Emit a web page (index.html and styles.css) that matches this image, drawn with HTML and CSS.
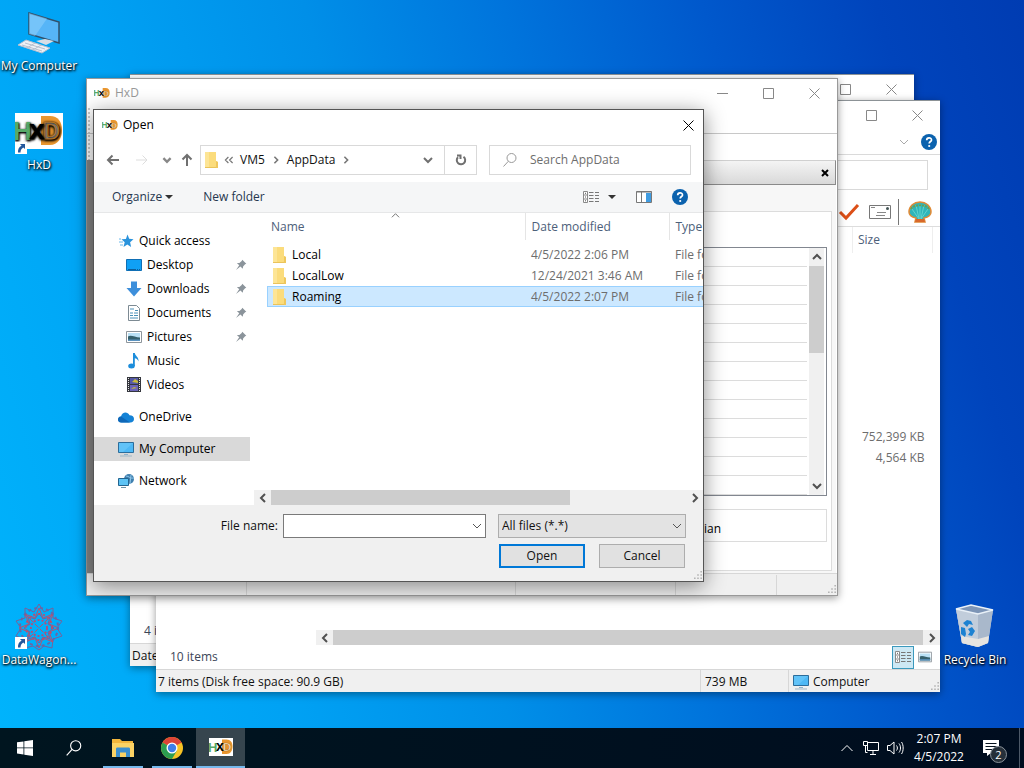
FILE: index.html
```html
<!DOCTYPE html>
<html lang="en">
<head>
    <meta charset="UTF-8" />
    <meta name="viewport" content="width=device-width, initial-scale=1.0" />
    <title>Desktop</title>
    <link rel="stylesheet" href="styles.css">
</head>
<body>
    <!-- shared icons -->
    <svg class="sprite" aria-hidden="true">
        <symbol id="i-min" viewBox="0 0 11 11"><path d="M0 5.500h11" /></symbol>
        <symbol id="i-max" viewBox="0 0 11 11"><path d="M.5.5h10v10h-10z" /></symbol>
        <symbol id="i-close" viewBox="0 0 11 11"><path d="M.5.5l10 10M10.500.5l-10 10" /></symbol>
        <symbol id="i-down" viewBox="0 0 10 10"><path d="M1 3l4 4 4-4" /></symbol>
        <symbol id="i-up" viewBox="0 0 10 10"><path d="M1 7l4-4 4 4" /></symbol>
        <symbol id="i-left" viewBox="0 0 10 10"><path d="M7 1L3 5l4 4" /></symbol>
        <symbol id="i-right" viewBox="0 0 10 10"><path d="M3 1l4 4-4 4" /></symbol>
        <symbol id="i-caret" viewBox="0 0 8 4"><path d="M0 0h8L4 4z" /></symbol>
        <symbol id="i-grip" viewBox="0 0 10 10">
            <path d="M8 0h2v2H8zM8 4h2v2H8zM8 8h2v2H8zM4 4h2v2H4zM4 8h2v2H4zM0 8h2v2H0z" fill="#b4b4b4" />
        </symbol>
        <symbol id="i-search" viewBox="0 0 16 16">
            <circle cx="9.500" cy="6" r="4.500" /><path d="M6.300 9.300L1.500 14.500" />
        </symbol>
        <symbol id="i-help" viewBox="0 0 16 16">
            <circle cx="8" cy="8" r="8" fill="#0b62ae" />
            <path d="M5.700 6.200c0-3 4.800-3 4.800-.3C10.500 7.500 8.200 7.600 8.200 9.600" fill="none" stroke="#fff" stroke-width="1.700" />
            <circle cx="8.200" cy="12" r="1.100" fill="#fff" />
        </symbol>
        <symbol id="i-list" viewBox="0 0 16 12">
            <path d="M.5.5h4v11h-4zM.5 4h4M.5 8h4" fill="#fff" stroke="#8a8a8a" />
            <path d="M2 2.300h1M2 6h1M2 9.800h1" stroke="#555" />
            <path d="M6 1.500h4.500M12 1.500h4M6 4.500h4.500M12 4.500h4M6 7.500h4.500M12 7.500h4M6 10.500h4.500M12 10.500h4" stroke="#777" />
        </symbol>
        <symbol id="i-folder" viewBox="0 0 16 16">
            <path d="M1 0h11v9l2 1v6H1z" fill="#fbdc7c" />
            <path d="M1 0h4v16H1z" fill="#fde596" />
            <path d="M12 9l2 1v6h-3l1-1.500z" fill="#efc75c" />
            <path d="M1 15.500h11" stroke="#eac35a" />
        </symbol>
        <symbol id="i-pc" viewBox="0 0 16 16">
            <path d="M.5 1.500h15v10H.5z" fill="#4db8f5" stroke="#2c6d9b" />
            <path d="M1 2h14L5 11H1z" fill="#6fcafa" opacity=".6" />
            <path d="M6 13.500h4" stroke="#8fb3cc" /><path d="M2 15h12" stroke="#9fb7c6" />
        </symbol>
        <symbol id="i-pic" viewBox="0 0 16 16">
            <path d="M.5 2.500h15v11H.5z" fill="#fff" stroke="#8d959b" />
            <path d="M2 4h12v8H2z" fill="#b9e0f5" />
            <path d="M2 7.500c3-2 7 1 12 1V12H2z" fill="#35606c" /><path d="M2 10.500h12V12H2z" fill="#5b93c0" />
        </symbol>
        <symbol id="i-pin" viewBox="0 0 12 12">
            <path d="M7.300.8l4 4-1.200.5-2 2.200-.3 2.300L5.400 7.600 1 11l3.200-4.700-2.300-2.200 2.500-.2 2.300-2z" fill="#8b949b" />
        </symbol>
        <symbol id="i-shortcut" viewBox="0 0 12 12">
            <path d="M0 0h12v12H0z" fill="#fff" />
            <path d="M5 2h5v5L8.300 5.400C6.500 6.500 5.500 8 5.500 10.500H3C2.800 7 4 5 6.600 3.700z" fill="#24579c" />
        </symbol>
        <symbol id="i-hxd" viewBox="0 0 48 36">
            <path d="M26 3h9c8 0 12 6 12 14s-4 15-12 15h-9z" fill="#e9962f" />
            <g font-family="Liberation Sans" font-weight="bold">
                <text x="-2" y="27" font-size="26" fill="#57a968">H</text>
                <text x="28" y="26" font-size="23" fill="#fbe9cf" stroke="#b8741f" stroke-width="1">D</text>
                <text x="14" y="26" font-size="28" fill="#000">x</text>
            </g>
        </symbol>
    </svg>

    <main class="desktop">
        <!-- desktop shortcuts -->
        <a class="shortcut shortcut-computer" href="#">
            <svg class="shortcut-icon" viewBox="0 0 48 48">
                <path d="M14 4l30 9v21L14 25z" fill="#56b5f7" stroke="#31506b" stroke-width="1.500" />
                <path d="M14 4l18 5.500L20 27l-6-2z" fill="#8fd0fb" opacity=".55" />
                <path d="M21 32l9-2 9 2-8 4z" fill="#d7dde6" />
                <path d="M3 36l8-5 24 8-8 5z" fill="#edf0f5" stroke="#b5bfcf" />
                <path d="M7 36l20 6M10 34l20 6M12 39l8-5M18 41l8-5" stroke="#b5bfcf" />
            </svg>
            <span>My Computer</span>
        </a>
        <a class="shortcut shortcut-hxd" href="#">
            <svg class="shortcut-icon" viewBox="0 0 48 48">
                <path d="M0 5h48v36H0z" fill="#fff" />
                <use href="#i-hxd" y="5" width="48" height="36" />
                <use href="#i-shortcut" x="0" y="34" width="12" height="12" />
            </svg>
            <span>HxD</span>
        </a>
        <a class="shortcut shortcut-wagon" href="#">
            <svg class="shortcut-icon" viewBox="0 0 48 48">
                <g fill="none" stroke="#75639c">
                    <path d="M24 1l5 8 9-4v10l9 3-5 7 5 8-9 3-1 9-8-2-5 4-6-4-8 2-1-9-8-3 5-8-5-7 9-3V5l9 4z" />
                    <path d="M24 5l4 10 10-4-4 10 10 4-10 4 4 10-10-4-4 10-4-10-10 4 4-10-10-4 10-4-4-10 10 4z" stroke="#b9506f" />
                    <path d="M24 10l4 6 7-2-2 7 6 4-6 4 2 7-7-2-4 6-4-6-7 2 2-7-6-4 6-4-2-7 7 2z" />
                    <path d="M10 11l28 28M38 11L10 39" stroke="#b9506f" stroke-dasharray="5 2" />
                    <circle cx="24" cy="25" r="8" stroke="#b04f7d" stroke-width="2" stroke-dasharray="2 2" />
                    <circle cx="24" cy="24" r="13" stroke="#b9506f" stroke-width="2" stroke-dasharray="2 3" />
                    <circle cx="24" cy="24" r="19" stroke-width="2" stroke-dasharray="3 3" stroke="#6967a6" />
                </g>
                <use href="#i-shortcut" x="0" y="34" width="12" height="12" />
            </svg>
            <span>DataWagon...</span>
        </a>
        <a class="shortcut shortcut-bin" href="#">
            <svg class="shortcut-icon" viewBox="0 0 48 48">
                <path d="M5 6l15-4 22 5-5 33-10 4-16-4z" fill="#b5c7dc" />
                <path d="M5 6l22 5 15-4-5 33-10 4-16-4z" fill="#a9b8cb" />
                <path d="M5 6l22 5v33l-16-4z" fill="#c1cddb" />
                <path d="M10 33l17 3 11-3-1 7-10 4-16-4z" fill="#e6e4e0" />
                <path d="M5 6l15-4 22 5-15 4z" fill="#7d95b6" stroke="#e9f1f8" stroke-width="1.500" />
                <path d="M12 20l4-3 4 1 2 4-4-1-2 3zM21 24l3 4-3 5-4-1 2-3-2-3zM10 24l4 1 1 6-1 3-4-3z" fill="#1c82d2" />
            </svg>
            <span>Recycle Bin</span>
        </a>

        <!-- window at the very back -->
        <section class="window win-back">
            <header class="titlebar">
                <div class="controls">
                    <button aria-label="Minimize"><svg><use href="#i-min" /></svg></button>
                    <button aria-label="Maximize"><svg><use href="#i-max" /></svg></button>
                    <button aria-label="Close"><svg><use href="#i-close" /></svg></button>
                </div>
            </header>
            <div class="fill"></div>
            <div class="item-count">4 items</div>
            <footer class="statusbar"><span class="status-text">Date</span></footer>
        </section>

        <!-- file explorer -->
        <section class="window win-explorer">
            <header class="titlebar">
                <div class="controls">
                    <button aria-label="Minimize"><svg><use href="#i-min" /></svg></button>
                    <button aria-label="Maximize"><svg><use href="#i-max" /></svg></button>
                    <button aria-label="Close"><svg><use href="#i-close" /></svg></button>
                </div>
            </header>
            <div class="ribbon">
                <button class="icon-btn" aria-label="Expand ribbon"><svg class="stroke-light"><use href="#i-down" /></svg></button>
                <button class="icon-btn" aria-label="Help"><svg class="ic16"><use href="#i-help" /></svg></button>
            </div>
            <div class="explorer-address"><input type="text" aria-label="Address" /></div>
            <div class="explorer-tools">
                <button class="icon-btn" aria-label="Apply">
                    <svg class="ic22" viewBox="0 0 22 22"><path d="M2 11l6 6L20 4" fill="none" stroke="#dc4f17" stroke-width="3" /></svg>
                </button>
                <button class="icon-btn" aria-label="Mail">
                    <svg class="ic22" viewBox="0 0 22 22">
                        <path d="M.5 4.500h21v13H.5z" fill="#fff" stroke="#777" />
                        <path d="M2 6.500h4M8 11.500h9M7 14.500h9" stroke="#888" /><circle cx="18.500" cy="7.500" r="1.500" fill="#455" />
                    </svg>
                </button>
                <span class="tool-sep"></span>
                <button class="icon-btn" aria-label="Shell">
                    <svg class="ic24" viewBox="0 0 24 24">
                        <path d="M7 22l1-4C3 17 1 15 1 12 1 6 6 2 12 2s11 4 11 10c0 3-2 5-7 6l1 4z" fill="#2fb5b9" stroke="#e08a36" stroke-width="1.500" />
                        <path d="M12 4v15M8 5l3 14M16 5l-3 14M4 9l7 10M20 9l-7 10" stroke="#62d3cf" fill="none" />
                        <path d="M3 9c3-5 15-5 18 0" stroke="#6b9e55" stroke-width="2" stroke-dasharray="2 1" fill="none" />
                        <path d="M7 22l1-3h8l1 3z" fill="#d8682b" />
                    </svg>
                </button>
            </div>
            <div class="explorer-body">
                <div class="explorer-list">
                    <table class="size-table">
                        <thead><tr><th>Size</th></tr></thead>
                        <tbody>
                            <tr><td></td></tr><tr><td></td></tr><tr><td></td></tr><tr><td></td></tr>
                            <tr><td></td></tr><tr><td></td></tr><tr><td></td></tr><tr><td></td></tr>
                            <tr><td>752,399 KB</td></tr>
                            <tr><td>4,564 KB</td></tr>
                        </tbody>
                    </table>
                </div>
                <div class="hscroll">
                    <button aria-label="Scroll left"><svg><use href="#i-left" /></svg></button>
                    <div class="track"><div class="thumb thumb-full"></div></div>
                    <button aria-label="Scroll right"><svg><use href="#i-right" /></svg></button>
                </div>
            </div>
            <div class="item-count">
                <span>10 items</span>
                <div class="view-switch">
                    <button class="active" aria-label="Details"><svg class="ic-list"><use href="#i-list" /></svg></button>
                    <button aria-label="Thumbnails"><svg class="ic14"><use href="#i-pic" /></svg></button>
                </div>
            </div>
            <footer class="statusbar">
                <span class="status-text">7 items (Disk free space: 90.9 GB)</span>
                <span class="status-cell status-memory">739 MB</span>
                <span class="status-cell status-zone"><svg class="ic16"><use href="#i-pc" /></svg>Computer</span>
                <svg class="grip"><use href="#i-grip" /></svg>
            </footer>
        </section>

        <!-- HxD main window -->
        <section class="window win-hxd">
            <header class="titlebar">
                <svg class="app-icon"><use href="#i-hxd" /></svg>
                <h2>HxD</h2>
                <div class="controls">
                    <button aria-label="Minimize"><svg><use href="#i-min" /></svg></button>
                    <button aria-label="Maximize"><svg><use href="#i-max" /></svg></button>
                    <button aria-label="Close"><svg><use href="#i-close" /></svg></button>
                </div>
            </header>
            <div class="hxd-menubar"></div>
            <div class="hxd-toolbar"></div>
            <div class="hxd-main">
                <div class="hxd-gutter"></div>
                <div class="inspector">
                    <div class="inspector-head">
                        <button aria-label="Close panel"><svg viewBox="0 0 8 8"><path d="M1 1l6 6M7 1L1 7" /></svg></button>
                    </div>
                    <div class="inspector-pane">
                        <div class="inspector-sheet">
                            <div class="inspector-list">
                                <div class="inspector-rows"></div>
                                <div class="vscroll">
                                    <button aria-label="Scroll up"><svg><use href="#i-up" /></svg></button>
                                    <div class="vtrack"><div class="vthumb"></div></div>
                                    <button aria-label="Scroll down"><svg><use href="#i-down" /></svg></button>
                                </div>
                            </div>
                            <div class="byte-order">Big endian</div>
                        </div>
                    </div>
                </div>
            </div>
            <footer class="statusbar hxd-status">
                <span></span><span></span><span></span><span></span><span></span>
                <svg class="grip"><use href="#i-grip" /></svg>
            </footer>
        </section>

        <!-- open dialog -->
        <section class="window dialog" role="dialog" aria-labelledby="dialog-title">
            <header class="titlebar">
                <svg class="app-icon"><use href="#i-hxd" /></svg>
                <h1 id="dialog-title">Open</h1>
                <button class="dialog-close" aria-label="Close"><svg><use href="#i-close" /></svg></button>
            </header>

            <nav class="navbar">
                <button class="nav-btn" aria-label="Back"><svg viewBox="0 0 14 14"><path d="M13 7H2M6.500 2.500L2 7l4.500 4.500" /></svg></button>
                <button class="nav-btn disabled" aria-label="Forward"><svg viewBox="0 0 14 14"><path d="M1 7h11M7.500 2.500L12 7l-4.500 4.500" /></svg></button>
                <button class="nav-btn nav-recent" aria-label="Recent locations"><svg viewBox="0 0 10 10"><path d="M2 3.500l3 3 3-3" /></svg></button>
                <button class="nav-btn nav-up" aria-label="Up"><svg viewBox="0 0 14 14"><path d="M7 13V2M2.500 6.500L7 2l4.500 4.500" /></svg></button>
                <div class="address">
                    <svg class="ic16"><use href="#i-folder" /></svg>
                    <svg class="crumb-arrow crumb-more" viewBox="0 0 10 10"><path d="M4.500 2.500L2 5l2.500 2.500M8 2.500L5.500 5 8 7.500" /></svg>
                    <a href="#">VM5</a>
                    <svg class="crumb-arrow"><use href="#i-right" /></svg>
                    <a href="#">AppData</a>
                    <svg class="crumb-arrow"><use href="#i-right" /></svg>
                    <button class="address-drop" aria-label="Previous locations"><svg><use href="#i-down" /></svg></button>
                    <button class="refresh" aria-label="Refresh">
                        <svg viewBox="0 0 12 12"><path d="M3 3.200A4.200 4.200 0 1 0 8.500 2.800M2 1.500h3.500V5" /></svg>
                    </button>
                </div>
                <label class="search">
                    <svg><use href="#i-search" /></svg>
                    <input type="text" placeholder="Search AppData" aria-label="Search AppData" />
                </label>
            </nav>

            <div class="toolbar">
                <button>Organize <svg class="caret"><use href="#i-caret" /></svg></button>
                <button class="new-folder">New folder</button>
                <div class="toolbar-right">
                    <button aria-label="Change view"><svg class="ic-list"><use href="#i-list" /></svg><svg class="caret caret-view"><use href="#i-caret" /></svg></button>
                    <button aria-label="Preview pane">
                        <svg class="ic16" viewBox="0 0 16 16"><path d="M.5 2.500h15v11H.5z" fill="#fff" stroke="#777" /><path d="M.5 3h15M5.500 3v10" stroke="#777" /><path d="M10 4h5v9h-5z" fill="#3f9be0" /></svg>
                    </button>
                    <button aria-label="Get help"><svg class="ic16"><use href="#i-help" /></svg></button>
                </div>
            </div>

            <div class="browser">
                <ul class="tree">
                    <li class="node"><svg class="ic16" viewBox="0 0 16 16"><path d="M9.500 1.500l1.700 4.300 4.300.4-3.400 3 1 4.800-3.800-2.600L5.500 14l1.200-4.700-3.200-3 4.400-.4z" fill="#2a93dc" /><path d="M1 9h4M2 12h3M1 6h2" stroke="#69b8ec" /></svg>Quick access</li>
                    <li class="node child"><svg class="ic16" viewBox="0 0 16 16"><path d="M.5 2.500h15v11H.5z" fill="#10a0f5" stroke="#0f6fb5" /><path d="M2 12.500h12" stroke="#0d5f9c" stroke-dasharray="8 1 1 1" /></svg>Desktop<svg class="pin"><use href="#i-pin" /></svg></li>
                    <li class="node child"><svg class="ic16" viewBox="0 0 16 16"><path d="M5 .5h6V7h4.500L8 15.500.5 7H5z" fill="#3d8fdb" /></svg>Downloads<svg class="pin"><use href="#i-pin" /></svg></li>
                    <li class="node child"><svg class="ic16" viewBox="0 0 16 16"><path d="M2.500.5h8l3 3v12h-11z" fill="#fff" stroke="#7d8a93" /><path d="M4 4h4M9 5.500h3M4 8h3M8 8h4M4 10.500h3M8 10.500h4M4 13h8" stroke="#4a90b8" /></svg>Documents<svg class="pin"><use href="#i-pin" /></svg></li>
                    <li class="node child"><svg class="ic16"><use href="#i-pic" /></svg>Pictures<svg class="pin"><use href="#i-pin" /></svg></li>
                    <li class="node child"><svg class="ic16" viewBox="0 0 16 16"><ellipse cx="5.500" cy="13" rx="3.300" ry="2.500" fill="#1c8ddb" /><path d="M7 0h1.800c.3 3 4.200 4 3.700 8.500-.6-2-2-3-3.700-3.300V13H7z" fill="#1c8ddb" /></svg>Music</li>
                    <li class="node child"><svg class="ic16" viewBox="0 0 16 16"><path d="M1 0h14v15H1z" fill="#34363d" /><path d="M2.500 1v14M13.500 1v14" stroke="#e8e8e8" stroke-dasharray="1 1" /><path d="M4 1h8v6H4z" fill="#5458a8" /><path d="M4 8h8v6H4z" fill="#6a63b8" /><path d="M6 5l3-3 3 2v2zM5 12l3-2 3 1" fill="#c7b93b" /></svg>Videos</li>
                    <li class="node group"><svg class="ic16" viewBox="0 0 16 16"><path d="M3.500 13.500C.8 13.500 0 12 0 10.500 0 9 1 7.600 3 7.400 4 3 9.500 2.200 11.500 6.300c3 0 4.500 1.700 4.500 3.700 0 2.200-1.500 3.500-3.500 3.500z" fill="#1482d6" /><path d="M3 7.400L12 13.500H3.500C.8 13.500 0 12 0 10.500 0 9 1 7.600 3 7.400z" fill="#0f68b8" /></svg>OneDrive</li>
                    <li class="node group selected"><svg class="ic16"><use href="#i-pc" /></svg>My Computer</li>
                    <li class="node group"><svg class="ic16" viewBox="0 0 16 16"><circle cx="11" cy="6" r="5" fill="#3f7fae" /><path d="M8 3c3 0 4 3 8 2M13 2l-1 9" stroke="#8fc5e8" fill="none" /><path d="M.5 5.500h10v7H.5z" fill="#5cc3f5" stroke="#23648f" /><path d="M3 14.500h5" stroke="#6d93a8" /></svg>Network</li>
                </ul>

                <div class="files">
                    <div class="files-view">
                        <svg class="sort-mark"><use href="#i-up" /></svg>
                        <table class="file-table">
                            <thead>
                                <tr><th class="col-name">Name</th><th class="col-date">Date modified</th><th class="col-type">Type</th></tr>
                            </thead>
                            <tbody>
                                <tr><td><svg class="ic16"><use href="#i-folder" /></svg>Local</td><td>4/5/2022 2:06 PM</td><td>File folder</td></tr>
                                <tr><td><svg class="ic16"><use href="#i-folder" /></svg>LocalLow</td><td>12/24/2021 3:46 AM</td><td>File folder</td></tr>
                                <tr class="selected"><td><svg class="ic16"><use href="#i-folder" /></svg>Roaming</td><td>4/5/2022 2:07 PM</td><td>File folder</td></tr>
                            </tbody>
                        </table>
                    </div>
                    <div class="hscroll">
                        <button aria-label="Scroll left"><svg><use href="#i-left" /></svg></button>
                        <div class="track"><div class="thumb"></div></div>
                        <button aria-label="Scroll right"><svg><use href="#i-right" /></svg></button>
                    </div>
                </div>
            </div>

            <form class="dialog-form">
                <div class="form-row">
                    <label class="name-label" for="file-name">File name:</label>
                    <div class="combo combo-name">
                        <input id="file-name" type="text" />
                        <svg><use href="#i-down" /></svg>
                    </div>
                    <div class="combo combo-type">
                        <select aria-label="File type"><option>All files (*.*)</option></select>
                        <svg><use href="#i-down" /></svg>
                    </div>
                </div>
                <div class="form-row form-actions">
                    <button class="btn btn-default" type="button">Open</button>
                    <button class="btn" type="button">Cancel</button>
                </div>
                <svg class="grip"><use href="#i-grip" /></svg>
            </form>
        </section>
    </main>

    <!-- taskbar -->
    <footer class="taskbar">
        <button class="task" aria-label="Start">
            <svg class="ic16" viewBox="0 0 16 16"><path d="M0 2.300L6.500 1.400v6.100H0zM7.300 1.300L16 0v7.500H7.300zM0 8.300h6.500v6.200L0 13.600zM7.300 8.300H16V16l-8.700-1.300z" fill="#fff" /></svg>
        </button>
        <button class="task" aria-label="Search"><svg class="ic18 stroke-white"><use href="#i-search" /></svg></button>
        <button class="task task-open" aria-label="File Explorer">
            <svg class="ic22" viewBox="0 0 22 22"><path d="M0 2h8l2 2h11v16H0z" fill="#f2b63c" /><path d="M0 6h22v14H0z" fill="#fbd365" /><path d="M4 20v-8c0-1 .5-1.500 1.500-1.500h11c1 0 1.500.5 1.500 1.500v8h-4v-4.500H8V20z" fill="#3b8fd0" /></svg>
        </button>
        <button class="task task-open" aria-label="Chrome">
            <svg class="ic22" viewBox="0 0 22 22">
                <circle cx="11" cy="11" r="11" fill="#f7c325" />
                <path d="M11 11L1.500 5.500A11 11 0 0 1 20.500 5.500z" fill="#dc4437" />
                <path d="M11 11L1.500 5.500A11 11 0 0 0 11 22l5-8.500z" fill="#2c9e50" />
                <path d="M11 5.500h9.500" stroke="#dc4437" />
                <circle cx="11" cy="11" r="5.500" fill="#fff" /><circle cx="11" cy="11" r="4.200" fill="#3f7fe8" />
            </svg>
        </button>
        <button class="task task-active" aria-label="HxD">
            <svg class="ic24" viewBox="0 0 24 24"><path d="M0 3h24v18H0z" fill="#fff" /><use href="#i-hxd" y="3" width="24" height="18" /></svg>
        </button>
        <div class="tray">
            <button class="tray-btn" aria-label="Show hidden icons"><svg class="ic14 stroke-white" viewBox="0 0 14 14"><path d="M1.500 10L7 4.500l5.500 5.500" /></svg></button>
            <button class="tray-btn" aria-label="Network"><svg class="ic18 stroke-white" viewBox="0 0 18 18"><path d="M5.500 3.500h11v8h-11zM8 15.500h6M11 11.500v4M1.500 2.500h4v4h-4zM3.500 6.500v7h2" /></svg></button>
            <button class="tray-btn" aria-label="Volume"><svg class="ic18 stroke-white" viewBox="0 0 18 18"><path d="M1.500 6.500H4l4-3.500v12l-4-3.500H1.500zM10.500 6.500c1.200 1.500 1.200 3.500 0 5M13 4.500c2 2.500 2 6.500 0 9M15.500 3c2.200 3 2.200 9 0 12" /></svg></button>
            <button class="clock"><span>2:07 PM</span><span>4/5/2022</span></button>
            <button class="notify" aria-label="Notifications">
                <svg viewBox="0 0 18 18"><path d="M1 1h16v13H9l-4 3v-3H1z" fill="#fff" /><path d="M3.500 4.500h11M3.500 7.500h11M3.500 10.500h7" stroke="#07131f" /></svg>
                <span class="badge">2</span>
            </button>
            <span class="peek"></span>
        </div>
    </footer>
</body>
</html>
```
FILE: styles.css
```css
*, *::before, *::after {
    box-sizing: border-box;
    margin: 0;
    padding: 0;
}

body {
    height: 100vh;
    display: flex;
    flex-direction: column;
    overflow: hidden;
    background: linear-gradient(74deg, #00b4fc 0%, #00a2f4 24%, #008fe8 42%, #0074dc 58%, #0058cc 74%, #0044bc 88%, #003cb2 100%);
    font-family: "Open Sans", "Noto Sans", sans-serif;
    font-size: 12px;
    line-height: 18px;
    color: #111;
}

button, input, select {
    font: inherit;
    color: inherit;
    border: none;
    background: none;
    outline: none;
}

a {
    color: inherit;
    text-decoration: none;
}

svg {
    display: block;
    flex: none;
    fill: none;
}

.sprite { display: none; }

.ic14 { width: 14px; height: 14px; }
.ic16 { width: 16px; height: 16px; }
.ic18 { width: 18px; height: 18px; }
.ic22 { width: 22px; height: 22px; }
.ic24 { width: 24px; height: 24px; }
.ic-list { width: 16px; height: 12px; }

.stroke-white { stroke: #fff; }
.stroke-light { width: 10px; height: 10px; stroke: #aaa; }

/* desktop */
.desktop {
    flex: 1;
    position: relative;
    min-height: 0;
}

.shortcut {
    position: absolute;
    width: 78px;
    display: flex;
    flex-direction: column;
    align-items: center;
    color: #fff;
    white-space: nowrap;
    text-shadow: 1px 1px 2px #000, 0 1px 3px #000;
}

.shortcut-icon {
    width: 48px;
    height: 48px;
}

.shortcut-computer { left: 0; top: 9px; }
.shortcut-hxd { left: 0; top: 108px; }
.shortcut-wagon { left: 0; bottom: 59px; }
.shortcut-bin { right: 10px; bottom: 59px; }

/* windows */
.window {
    position: absolute;
    display: flex;
    flex-direction: column;
    overflow: hidden;
    background: #fff;
    border-top: 1px solid #8c9296;
    box-shadow: 0 2px 8px rgba(0, 0, 0, 0.4);
}

.win-back { inset: 74px 110px 62px 130px; }
.win-explorer { inset: 100px 84px 36px 156px; }
.win-hxd { inset: 78px 186px 132px 86px; border: 1px solid #999; }

.titlebar {
    flex: none;
    display: flex;
    align-items: center;
    height: 28px;
    padding-left: 7px;
    color: #999;
}

    .titlebar h1, .titlebar h2 {
        font-size: 12px;
        font-weight: 400;
    }

.app-icon {
    width: 16px;
    height: 12px;
    margin-right: 5px;
}

.controls {
    display: flex;
    margin-left: auto;
}

    .controls button {
        width: 46px;
        height: 28px;
        display: flex;
        align-items: center;
        justify-content: center;
    }

    .controls svg, .dialog-close svg {
        width: 11px;
        height: 11px;
        stroke: #888;
    }

.fill { flex: 1; }

.item-count {
    display: flex;
    align-items: center;
    height: 24px;
    padding: 0 4px 0 14px;
    color: #3b4658;
}

.statusbar {
    position: relative;
    flex: none;
    display: flex;
    align-items: center;
    height: 23px;
    background: #f0f0f0;
    border-top: 1px solid #d7d7d7;
}

.status-text {
    flex: 1;
    padding: 2px 0 0 2px;
    white-space: nowrap;
}

.status-cell {
    display: flex;
    align-items: center;
    gap: 4px;
    height: 22px;
    padding: 2px 0 0 4px;
    border-left: 1px solid #d7d7d7;
}

.status-memory { width: 88px; }
.status-zone { width: 152px; }

.grip {
    position: absolute;
    right: 1px;
    bottom: 2px;
    width: 8px;
    height: 8px;
}

/* explorer */
.ribbon {
    flex: none;
    display: flex;
    align-items: center;
    justify-content: flex-end;
    gap: 12px;
    height: 26px;
    padding-right: 3px;
    border-bottom: 1px solid #dadada;
}

.icon-btn { flex: none; }

.explorer-address {
    padding: 5px 12px 8px;
}

    .explorer-address input {
        display: block;
        width: 100%;
        height: 30px;
        border: 1px solid #d9d9d9;
    }

.explorer-tools {
    flex: none;
    display: flex;
    align-items: center;
    justify-content: flex-end;
    gap: 9px;
    height: 29px;
    padding-right: 8px;
    border-bottom: 1px solid #ddd;
}

.tool-sep {
    width: 1px;
    height: 26px;
    margin-left: -2px;
    background: #777;
}

.explorer-body {
    flex: 1;
    display: flex;
    flex-direction: column;
    margin-left: 160px;
    min-height: 0;
}

.explorer-list {
    flex: 1;
    display: flex;
    justify-content: flex-end;
    align-items: flex-start;
    padding-right: 7px;
}

.size-table {
    width: 81px;
    border-collapse: collapse;
}

    .size-table th {
        height: 26px;
        padding-left: 5px;
        border-left: 1px solid #eee;
        border-right: 1px solid #eee;
        text-align: left;
        font-weight: 400;
        color: #4c607a;
    }

    .size-table tbody::before {
        content: "";
        display: block;
        height: 5px;
    }

    .size-table td {
        height: 21px;
        padding-right: 8px;
        text-align: right;
        color: #6d6d6d;
    }

.hscroll {
    flex: none;
    display: flex;
    height: 15px;
    background: #f0f0f0;
}

    .hscroll button {
        width: 17px;
        display: flex;
        align-items: center;
        justify-content: center;
    }

    .hscroll svg, .vscroll svg {
        width: 10px;
        height: 10px;
        stroke: #505050;
        stroke-width: 2;
    }

.track { flex: 1; }

.thumb {
    width: 72%;
    height: 100%;
    background: #cdcdcd;
}

.thumb-full { width: 100%; }

.view-switch {
    display: flex;
    margin-left: auto;
}

    .view-switch button {
        display: flex;
        align-items: center;
        justify-content: center;
        width: 22px;
        height: 23px;
        border: 1px solid transparent;
    }

    .view-switch .active {
        background: #cde8f4;
        border-color: #3b99bd;
    }

/* hxd */
.hxd-menubar {
    height: 27px;
    border-bottom: 1px solid #c8c8c8;
}

.hxd-toolbar { height: 26px; }

.hxd-menubar, .hxd-toolbar {
    flex: none;
    background-image: radial-gradient(circle, #ccc 1px, transparent 1px);
    background-size: 4px 4px;
    background-repeat: repeat-y;
}

.hxd-main {
    flex: 1;
    display: flex;
    min-height: 0;
}

.hxd-gutter {
    width: 8px;
    background: #858585;
}

.inspector {
    flex: 1;
    display: flex;
    flex-direction: column;
    margin-right: 1px;
}

.inspector-head {
    flex: none;
    display: flex;
    align-items: center;
    justify-content: flex-end;
    height: 25px;
    padding-right: 6px;
    background: linear-gradient(#f4f4f4, #d9d9d9);
    border: 1px solid #d0d0d0;
    border-bottom-color: #8a8a8a;
    border-right-color: #8a8a8a;
}

    .inspector-head svg {
        width: 8px;
        height: 8px;
        stroke: #000;
        stroke-width: 2;
    }

.inspector-pane {
    flex: 1;
    display: flex;
    padding: 26px 4px 2px;
    background: #f7f7f7;
}

.inspector-sheet {
    flex: 1;
    display: flex;
    flex-direction: column;
    gap: 13px;
    padding: 35px 4px 28px;
    background: #fff;
    border: 1px solid #dcdcdc;
}

.inspector-list {
    flex: 1;
    display: flex;
    padding-right: 2px;
    border: 1px solid #828790;
}

.inspector-rows {
    flex: 1;
    margin-right: 2px;
    background: repeating-linear-gradient(#fff 0, #fff 18px, #dcdcdc 18px, #dcdcdc 19px);
}

.vscroll {
    display: flex;
    flex-direction: column;
    width: 15px;
    background: #f0f0f0;
}

    .vscroll button {
        flex: none;
        display: flex;
        align-items: center;
        justify-content: center;
        height: 18px;
    }

.vtrack { flex: 1; }

.vthumb {
    height: 41%;
    background: #cdcdcd;
}

.byte-order {
    flex: none;
    height: 33px;
    padding: 9px 105px 0 0;
    border: 1px solid #dcdcdc;
    line-height: 20px;
    text-align: right;
    color: #000;
}

.hxd-status { height: 22px; }

    .hxd-status span {
        flex: 1;
        height: 20px;
        border-left: 1px solid #d7d7d7;
    }

        .hxd-status span:nth-child(1) { flex: 0 1 159px; border-left: none; }
        .hxd-status span:nth-child(2) { flex: 0 1 269px; }
        .hxd-status span:nth-child(3) { flex: 0 1 160px; }
        .hxd-status span:nth-child(4) { flex: 0 1 101px; }

/* open dialog */
.dialog {
    inset: 109px 320px 146px 93px;
    border: 1px solid #555;
    box-shadow: 0 4px 20px rgba(0, 0, 0, 0.45);
}

    .dialog .titlebar {
        height: 30px;
        padding-left: 8px;
        color: #000;
    }

.dialog-close {
    width: 30px;
    height: 28px;
    margin-left: auto;
    display: flex;
    align-items: center;
    justify-content: center;
}

    .dialog-close svg { stroke: #000; }

.navbar {
    flex: none;
    display: flex;
    align-items: center;
    height: 42px;
    padding: 0 12px 2px 12px;
}

.nav-btn {
    flex: none;
    width: 14px;
    margin-right: 15px;
}

    .nav-btn svg {
        width: 14px;
        height: 14px;
        stroke: #707070;
        stroke-width: 2;
    }

    .nav-btn.disabled {
        margin-right: 12px;
    }

        .nav-btn.disabled svg {
            stroke: #ddd;
            stroke-width: 1;
        }

    .nav-btn.nav-recent {
        width: 12px;
        margin-right: 7px;
    }

        .nav-btn.nav-recent svg {
            width: 12px;
            height: 12px;
            stroke: #888;
        }

    .nav-btn.nav-up { margin-right: 6px; }

.address {
    flex: 0 1 277px;
    display: flex;
    align-items: center;
    height: 30px;
    padding-left: 3px;
    border: 1px solid #d9d9d9;
}

.crumb-arrow {
    width: 8px;
    height: 8px;
    margin: 0 7px;
    stroke: #777;
    stroke-width: 2;
}

.crumb-more {
    width: 12px;
    height: 12px;
    margin: 0 5px 0 3px;
    stroke-width: 1;
}

.address-drop, .refresh {
    height: 28px;
    display: flex;
    align-items: center;
    justify-content: center;
    width: 32px;
}

.address-drop { margin-left: auto; }
.refresh { border-left: 1px solid #d9d9d9; }

    .address-drop svg, .refresh svg {
        width: 10px;
        height: 10px;
        stroke: #707070;
        stroke-width: 2;
    }

    .refresh svg {
        width: 12px;
        height: 12px;
    }

.search {
    flex: 1;
    display: flex;
    align-items: center;
    gap: 12px;
    height: 30px;
    min-width: 0;
    margin-left: 12px;
    padding-left: 12px;
    border: 1px solid #d9d9d9;
}

    .search svg {
        width: 16px;
        height: 16px;
        stroke: #999;
    }

    .search input {
        flex: 1;
        min-width: 0;
    }

        .search input::placeholder { color: #6d6d6d; }

.toolbar {
    flex: none;
    display: flex;
    align-items: center;
    height: 31px;
    padding: 0 15px 0 18px;
    background: #f5f6f7;
    border-bottom: 1px solid #e6e7e8;
    color: #26374f;
}

    .toolbar button {
        display: flex;
        align-items: center;
        gap: 3px;
    }

    .toolbar .new-folder { margin-left: 30px; }

.caret {
    width: 8px;
    height: 4px;
    fill: #333;
}

.caret-view { margin-left: 6px; }

.toolbar-right {
    display: flex;
    gap: 20px;
    margin-left: auto;
}

.browser {
    flex: 1;
    display: flex;
    min-height: 0;
}

.tree {
    flex: none;
    width: 156px;
    padding-top: 16px;
    list-style: none;
    color: #000;
}

.node {
    display: flex;
    align-items: center;
    gap: 5px;
    height: 24px;
    padding: 0 3px 0 24px;
}

    .node.child { padding-left: 32px; }
    .node.group { margin-top: 8px; }
    .node.selected { background: #d9d9d9; }

.pin {
    width: 12px;
    height: 12px;
    margin-left: auto;
}

.files {
    flex: 1;
    display: flex;
    flex-direction: column;
    min-width: 0;
    padding-left: 4px;
}

.files-view {
    position: relative;
    flex: 1;
    overflow: hidden;
    padding-left: 13px;
}

.sort-mark {
    position: absolute;
    left: 137px;
    top: -2px;
    width: 9px;
    height: 9px;
    stroke: #666;
}

.file-table {
    width: 520px;
    table-layout: fixed;
    border-collapse: collapse;
    white-space: nowrap;
}

    .file-table th {
        height: 27px;
        padding-left: 6px;
        border-right: 1px solid #e5e5e5;
        text-align: left;
        font-weight: 400;
        color: #4c607a;
    }

        .file-table th.col-name { width: 258px; padding-left: 4px; }
        .file-table th.col-date { width: 144px; }

    .file-table tbody::before {
        content: "";
        display: block;
        height: 4px;
    }

    .file-table td {
        height: 21px;
        padding-left: 6px;
        color: #6d6d6d;
    }

        .file-table td:first-child {
            display: flex;
            align-items: center;
            gap: 4px;
            padding-left: 5px;
            color: #000;
        }

    .file-table .selected {
        background: #cce8ff;
        box-shadow: inset 0 0 0 1px #99d1ff;
    }

.dialog-form {
    position: relative;
    flex: none;
    display: flex;
    flex-direction: column;
    gap: 6px;
    padding: 9px 17px 13px 0;
    background: #f0f0f0;
}

.form-row {
    display: flex;
    align-items: center;
}

.name-label {
    flex: 0 0 184px;
    margin-right: 5px;
    text-align: right;
}

.combo {
    position: relative;
    height: 24px;
}

    .combo input, .combo select {
        display: block;
        width: 100%;
        height: 24px;
        padding: 0 3px;
        border: 1px solid #7a7a7a;
        background: #fff;
        appearance: none;
    }

    .combo select {
        background: #e3e3e3;
        border-color: #adadad;
    }

    .combo svg {
        position: absolute;
        right: 4px;
        top: 7px;
        width: 10px;
        height: 10px;
        stroke: #555;
        pointer-events: none;
    }

.combo-name { flex: 203; }

.combo-type {
    flex: 188;
    margin-left: 12px;
}

.form-actions {
    justify-content: flex-end;
    gap: 14px;
    padding-right: 1px;
}

.btn {
    width: 86px;
    height: 24px;
    background: #e1e1e1;
    border: 1px solid #adadad;
}

.btn-default { border: 2px solid #0078d7; }

/* taskbar */
.taskbar {
    flex: none;
    display: flex;
    height: 40px;
    background: linear-gradient(90deg, #00151f, #000d1f);
    color: #fff;
}

.task {
    position: relative;
    display: flex;
    align-items: center;
    justify-content: center;
    width: 49px;
}

.task-open::after {
    content: "";
    position: absolute;
    left: 5px;
    right: 4px;
    bottom: 0;
    height: 2px;
    background: #76b9ed;
}

.task-active {
    background: #36454e;
    border-bottom: 2px solid #76b9ed;
}

.tray {
    display: flex;
    align-items: center;
    margin-left: auto;
}

.tray-btn {
    display: flex;
    align-items: center;
    justify-content: center;
    width: 24px;
    height: 40px;
}

.clock {
    width: 64px;
    text-align: center;
}

    .clock span { display: block; }

.notify {
    position: relative;
    width: 48px;
    height: 40px;
    padding-left: 11px;
}

    .notify svg {
        width: 18px;
        height: 18px;
    }

.badge {
    position: absolute;
    left: 19px;
    top: 18px;
    width: 17px;
    height: 17px;
    border: 1px solid #8a929a;
    border-radius: 50%;
    background: #26303a;
    font-size: 11px;
    line-height: 15px;
}

.peek {
    width: 5px;
    height: 40px;
    border-left: 1px solid #4d5968;
}
```
